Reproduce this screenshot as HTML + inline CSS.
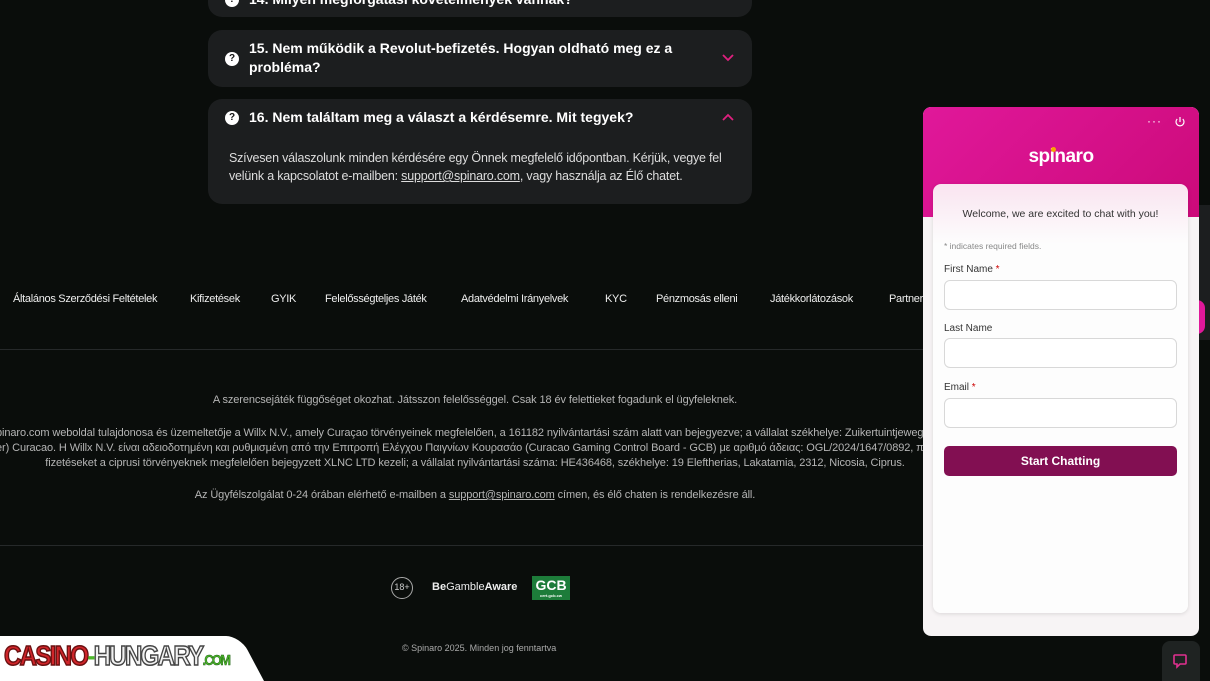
<!DOCTYPE html>
<html><head><meta charset="utf-8">
<style>
*{box-sizing:border-box;margin:0;padding:0}
body{width:1210px;height:681px;overflow:hidden;background:#0a0d0b;font-family:"Liberation Sans",sans-serif;position:relative;color:#fff}
.card{position:absolute;left:208px;width:544px;background:#1c1e1f;border-radius:14px}
.q{position:absolute;left:17px;width:14px;height:14px;border-radius:50%;background:#fff;color:#111;font-size:10px;font-weight:bold;text-align:center;line-height:14px}
.t{position:absolute;left:41px;font-weight:bold;font-size:14px;line-height:19px;color:#fff}
.chev{position:absolute;right:18px}
.nav{position:absolute;top:293px;font-size:11px;color:#eee;white-space:nowrap;letter-spacing:-0.3px}
.f{position:absolute;left:-500px;width:1950px;text-align:center;font-size:11px;color:#b5b5b5;white-space:nowrap;letter-spacing:-0.1px}
.chat{position:absolute;left:923px;top:107px;width:276px;height:529px;border-radius:8px;background:#f7f4f5;overflow:hidden}
.hdr{position:absolute;left:0;top:0;width:276px;height:110px;background:linear-gradient(135deg,#e0189a,#cc0a7a)}
.inner{position:absolute;left:10px;top:77px;width:255px;height:429px;border-radius:8px;background:linear-gradient(#f9e4f0,#fdfdfd 60px);box-shadow:0 1px 4px rgba(0,0,0,.12)}
.lbl{position:absolute;left:11px;font-size:10px;color:#333}
.lbl b{color:#c00;font-weight:normal}
.in{position:absolute;left:11px;width:233px;height:30px;border:1px solid #d8d8d8;border-radius:6px;background:#fff}
</style></head><body>

<div class="card" style="top:-30px;height:47px"><div class="q" style="top:23px">?</div><div class="t" style="top:20px">14. Milyen megforgatási követelmények vannak?</div></div>

<div class="card" style="top:30px;height:57px">
<div class="q" style="top:22px">?</div>
<div class="t" style="top:9px">15. Nem működik a Revolut-befizetés. Hogyan oldható meg ez a<br>probléma?</div>
<svg class="chev" style="top:24px" width="12" height="8" viewBox="0 0 12 8"><path d="M1 1l5 5 5-5" stroke="#e0207f" stroke-width="1.8" fill="none"/></svg>
</div>

<div class="card" style="top:99px;height:105px">
<div class="q" style="top:12px">?</div>
<div class="t" style="top:9px">16. Nem találtam meg a választ a kérdésemre. Mit tegyek?</div>
<svg class="chev" style="top:14px" width="12" height="8" viewBox="0 0 12 8"><path d="M1 7l5-5 5 5" stroke="#e0207f" stroke-width="1.8" fill="none"/></svg>
<div style="position:absolute;left:21px;top:50px;font-size:12.5px;line-height:18px;color:#ddd;letter-spacing:-0.2px">Szívesen válaszolunk minden kérdésére egy Önnek megfelelő időpontban. Kérjük, vegye fel<br>velünk a kapcsolatot e-mailben: <u>support@spinaro.com</u>, vagy használja az Élő chatet.</div>
</div>

<div class="nav" style="left:13px">Általános Szerződési Feltételek</div>
<div class="nav" style="left:190px">Kifizetések</div>
<div class="nav" style="left:271px">GYIK</div>
<div class="nav" style="left:325px">Felelősségteljes Játék</div>
<div class="nav" style="left:461px">Adatvédelmi Irányelvek</div>
<div class="nav" style="left:605px">KYC</div>
<div class="nav" style="left:656px">Pénzmosás elleni</div>
<div class="nav" style="left:770px">Játékkorlátozások</div>
<div class="nav" style="left:889px">Partnerek</div>

<div style="position:absolute;left:0;top:349px;width:930px;height:1px;background:#26292a"></div>

<div class="f" style="top:394px">A szerencsejáték függőséget okozhat. Játsszon felelősséggel. Csak 18 év felettieket fogadunk el ügyfeleknek.</div>
<div class="f" style="top:427px;left:-4px;width:auto;text-align:left">pinaro.com weboldal tulajdonosa és üzemeltetője a Willx N.V., amely Curaçao törvényeinek megfelelően, a 161182 nyilvántartási szám alatt van bejegyezve; a vállalat székhelye: Zuikertuintjeweg z/n</div>
<div class="f" style="top:442px;left:-4px;width:auto;text-align:left">er) Curacao. Η Willx N.V. είναι αδειοδοτημένη και ρυθμισμένη από την Επιτροπή Ελέγχου Παιγνίων Κουρασάο (Curacao Gaming Control Board - GCB) με αριθμό άδειας: OGL/2024/1647/0892, που εκδόθηκε στις 22 Νοεμ</div>
<div class="f" style="top:457px">fizetéseket a ciprusi törvényeknek megfelelően bejegyzett XLNC LTD kezeli; a vállalat nyilvántartási száma: HE436468, székhelye: 19 Eleftherias, Lakatamia, 2312, Nicosia, Ciprus.</div>
<div class="f" style="top:489px">Az Ügyfélszolgálat 0-24 órában elérhető e-mailben a <u>support@spinaro.com</u> címen, és élő chaten is rendelkezésre áll.</div>

<div style="position:absolute;left:0;top:545px;width:930px;height:1px;background:#26292a"></div>

<div style="position:absolute;left:391px;top:577px;width:22px;height:22px;border:1.5px solid #aaa;border-radius:50%;font-size:9px;color:#ccc;text-align:center;line-height:19px">18+</div>
<div style="position:absolute;left:432px;top:581px;font-size:11px;color:#eee"><b>Be</b>Gamble<b>Aware</b></div>
<div style="position:absolute;left:532px;top:576px;width:38px;height:24px;background:#1d7c3a;color:#fff;font-weight:bold;font-size:14px;text-align:center;line-height:18px">GCB<div style="font-size:4px;line-height:4px">cert.gcb.cw</div></div>

<div style="position:absolute;left:0;top:636px;width:230px;height:45px;background:#fff;border-top-right-radius:30px"></div>
<div style="position:absolute;left:200px;top:636px;width:64px;height:45px;background:#fff;transform:skewX(28deg);transform-origin:bottom left;border-top-right-radius:14px"></div>
<div style="position:absolute;left:4px;top:640px;font-size:28px;font-weight:bold;letter-spacing:-2px;white-space:nowrap;transform:scaleX(0.86);transform-origin:left"><span style="color:#d0252a;-webkit-text-stroke:1.5px #6a1010">CASINO</span><span style="color:#4cb82a">-</span><span style="color:#f2f2f2;-webkit-text-stroke:1.5px #444">HUNGARY</span><span style="color:#4cb82a;font-size:15px;-webkit-text-stroke:0.5px #1a5a10">.COM</span></div>

<div style="position:absolute;left:402px;top:643px;font-size:9px;color:#aaa">© Spinaro 2025. Minden jog fenntartva</div>

<div style="position:absolute;left:1190px;top:205px;width:20px;height:135px;background:#1c1e1f"></div>
<div style="position:absolute;left:1190px;top:300px;width:15px;height:34px;background:#e0189a;border-radius:0 8px 8px 0"></div>

<div class="chat">
<div class="hdr"></div>
<div style="position:absolute;left:224px;top:7px;font-size:12px;color:#fff;letter-spacing:1px">···</div>
<svg style="position:absolute;left:251px;top:9px" width="12" height="12" viewBox="0 0 12 12"><path d="M6 1v5M3.2 3a4 4 0 1 0 5.6 0" stroke="#fff" stroke-width="1.2" fill="none"/></svg>
<div style="position:absolute;left:0;width:276px;top:39px;text-align:center;font-size:19px;font-weight:bold;color:#fff;letter-spacing:-0.5px">spinaro</div>
<div style="position:absolute;left:128px;top:40px;width:5px;height:5px;border-radius:50%;background:#f7a600"></div>
<div class="inner">
<div style="position:absolute;left:0;width:255px;top:24px;text-align:center;font-size:10.5px;color:#333">Welcome, we are excited to chat with you!</div>
<div class="lbl" style="top:57px;font-size:8.5px;color:#888">* indicates required fields.</div>
<div class="lbl" style="top:80px">First Name <b>*</b></div>
<div class="in" style="top:96px"></div>
<div class="lbl" style="top:139px">Last Name</div>
<div class="in" style="top:154px"></div>
<div class="lbl" style="top:198px">Email <b>*</b></div>
<div class="in" style="top:214px"></div>
<div style="position:absolute;left:11px;top:262px;width:233px;height:30px;border-radius:5px;background:#820f52;color:#fff;font-size:12px;font-weight:bold;text-align:center;line-height:30px">Start Chatting</div>
</div>
</div>

<div style="position:absolute;left:1162px;top:641px;width:38px;height:40px;background:#1f2322;border-radius:8px 8px 0 0"></div>
<svg style="position:absolute;left:1173px;top:654px" width="14" height="15" viewBox="0 0 14 15"><path d="M2 1h10a1 1 0 0 1 1 1v7a1 1 0 0 1-1 1H7l-3 3v-3H2a1 1 0 0 1-1-1V2a1 1 0 0 1 1-1z" stroke="#e0308f" stroke-width="1.6" fill="none"/></svg>
</body></html>
